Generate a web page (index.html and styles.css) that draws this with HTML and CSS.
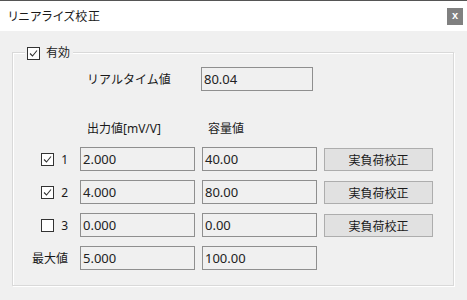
FILE: index.html
```html
<!DOCTYPE html>
<html lang="ja">
<head>
    <meta charset="UTF-8">
    <title>リニアライズ校正</title>
    <link rel="stylesheet" href="styles.css">
</head>
<body>
    <div class="titlebar">
        <span class="title">リニアライズ校正</span>
        <span class="close">x</span>
    </div>

    <div class="group">
        <div class="legend">
            <span class="check on"><svg width="11" height="11" viewBox="0 0 11 11"><polyline points="2,5.5 4.5,8 9,2.5" fill="none" stroke="#333" stroke-width="1.1"/></svg></span>
            <span>有効</span>
        </div>

        <div class="grid">
            <!-- リアルタイム値 -->
            <span></span>
            <span class="label">リアルタイム値</span>
            <span class="box realtime">80.04</span>
            <span></span>

            <!-- 見出し -->
            <span></span>
            <span class="label head">出力値[mV/V]</span>
            <span class="label head head2">容量値</span>
            <span></span>

            <!-- 1 -->
            <span class="rowname"><span class="check on"><svg width="11" height="11" viewBox="0 0 11 11"><polyline points="2,5.5 4.5,8 9,2.5" fill="none" stroke="#333" stroke-width="1.1"/></svg></span>1</span>
            <span class="box">2.000</span>
            <span class="box">40.00</span>
            <button class="btn">実負荷校正</button>

            <!-- 2 -->
            <span class="rowname"><span class="check on"><svg width="11" height="11" viewBox="0 0 11 11"><polyline points="2,5.5 4.5,8 9,2.5" fill="none" stroke="#333" stroke-width="1.1"/></svg></span>2</span>
            <span class="box">4.000</span>
            <span class="box">80.00</span>
            <button class="btn">実負荷校正</button>

            <!-- 3 -->
            <span class="rowname"><span class="check"></span>3</span>
            <span class="box">0.000</span>
            <span class="box">0.00</span>
            <button class="btn">実負荷校正</button>

            <!-- 最大値 -->
            <span class="rowname">最大値</span>
            <span class="box">5.000</span>
            <span class="box">100.00</span>
            <span></span>
        </div>
    </div>
</body>
</html>
```

FILE: styles.css
```css
body {
    margin: 0;
    background: #f0f0f0;
    font-family: "Noto Sans", "Noto Sans CJK JP", sans-serif;
    font-size: 12px;
    color: #1a1a1a;
    height: 300px;
    overflow: hidden;
}
.titlebar {
    height: 30px;
    background: #fff;
    border-top: 1px solid #555;
    display: flex;
    align-items: center;
    justify-content: space-between;
    padding: 0 4px 0 8px;
}
.title {
    font-family: "Noto Sans CJK JP", sans-serif;
    font-feature-settings: "palt";
    font-size: 12px;
    letter-spacing: 0.6px;
    margin-top: -1px;
}
.close {
    width: 16px;
    height: 17px;
    background: #808080;
    color: #fff;
    font-family: "Liberation Sans", sans-serif;
    font-weight: bold;
    font-size: 11px;
    line-height: 15px;
    text-align: center;
}
.group {
    position: relative;
    margin: 21px 0 0 12px;
    width: 442px;
    height: 234px;
    box-sizing: border-box;
    border: 1px solid #d9d9d9;
    box-shadow: inset 1px 1px 0 #fff, 1px 1px 0 #fff;
}
.legend {
    position: absolute;
    top: -8px;
    left: 12px;
    padding: 0 3px 0 2px;
    background: #f0f0f0;
    display: flex;
    align-items: center;
    gap: 6px;
    line-height: 16px;
}
.check {
    width: 11px;
    height: 11px;
    border: 1px solid #333;
    background: #fff;
    display: inline-block;
    flex: none;
}
.check svg {
    display: block;
}
.grid {
    margin-top: 14px;
    display: grid;
    grid-template-columns: 60px 115px 115px 109px;
    grid-template-rows: 24px 38px 24px 24px 24px 24px;
    column-gap: 7px;
    row-gap: 9px;
}
.label {
    padding-left: 7px;
    align-self: center;
    white-space: nowrap;
}
.head {
    align-self: end;
    line-height: 16px;
    margin-bottom: 1px;
}
.head2 {
    padding-left: 6px;
}
.rowname {
    display: flex;
    align-items: center;
    justify-content: flex-end;
    gap: 7px;
    padding-right: 5px;
    white-space: nowrap;
}
.box {
    box-sizing: border-box;
    border: 1px solid #8f8f8f;
    background: #f0f0f0;
    padding-left: 2px;
    font-size: 13px;
    line-height: 22px;
    color: #222;
}
.realtime {
    margin-left: -1px;
    width: 112px;
}
.btn {
    align-self: center;
    height: 23px;
    margin-top: 1px;
    border: 1px solid #adadad;
    background: #e1e1e1;
    font-family: "Noto Sans CJK JP", sans-serif;
    font-size: 12px;
    color: #1a1a1a;
    padding: 0;
}
```
